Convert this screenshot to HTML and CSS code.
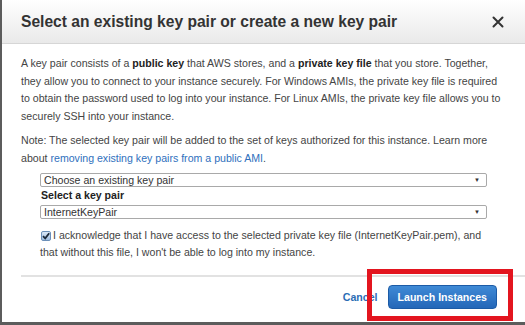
FILE: index.html
```html
<!DOCTYPE html>
<html lang="en">
<head>
  <meta charset="UTF-8">
  <title>Select an existing key pair</title>
  <link rel="stylesheet" href="styles.css">
</head>
<body>
  <div class="modal">
    <div class="modal-header">
      <h2 class="modal-title">Select an existing key pair or create a new key pair</h2>
      <button class="close-btn" aria-label="Close">
        <svg width="12" height="12" viewBox="0 0 12 12"><path d="M1.5 1.5 L10.5 10.5 M10.5 1.5 L1.5 10.5" stroke="#333" stroke-width="2" stroke-linecap="round"/></svg>
      </button>
    </div>

    <div class="modal-body">
      <p class="intro">A key pair consists of a <b>public key</b> that AWS stores, and a <b>private key file</b> that you store. Together, they allow you to connect to your instance securely. For Windows AMIs, the private key file is required to obtain the password used to log into your instance. For Linux AMIs, the private key file allows you to securely SSH into your instance.</p>
      <p class="note">Note: The selected key pair will be added to the set of keys authorized for this instance. Learn more about <a href="#">removing existing key pairs from a public AMI</a>.</p>

      <div class="key-fields">
        <div class="select-box">
          <span>Choose an existing key pair</span>
          <span class="arrow">▼</span>
        </div>
        <div class="field-label">Select a key pair</div>
        <div class="select-box">
          <span>InternetKeyPair</span>
          <span class="arrow">▼</span>
        </div>
        <div class="ack">
          <span class="check"><svg width="8" height="8" viewBox="0 0 8 8"><path d="M1 4.2 L3.2 6.4 L7.2 1.2" fill="none" stroke="#1d2a3a" stroke-width="1.8"/></svg></span>I acknowledge that I have access to the selected private key file (InternetKeyPair.pem), and that without this file, I won't be able to log into my instance.
        </div>
      </div>
    </div>

    <div class="modal-footer">
      <a href="#" class="cancel">Cancel</a>
      <button class="launch">Launch Instances</button>
    </div>

    <div class="highlight"></div>
  </div>
</body>
</html>
```

FILE: styles.css
```css
body {
  margin: 0;
  background: #fff;
  font-family: "Liberation Sans", Arial, sans-serif;
}

.modal {
  position: relative;
  width: 525px;
  height: 325px;
  box-sizing: border-box;
  border-left: 2px solid #5c5c5c;
  border-bottom: 3px solid #5c5c5c;
  background: #fff;
  display: flex;
  flex-direction: column;
  overflow: hidden;
}

.modal-header {
  height: 44px;
  box-sizing: border-box;
  display: flex;
  align-items: center;
  justify-content: space-between;
  padding: 0 21px 0 19px;
  background: linear-gradient(#ffffff, #e9e9e9);
  border-bottom: 1px solid #d6d6d6;
}

.modal-title {
  margin: 0;
  font-size: 15.6px;
  font-weight: bold;
  color: #333;
}

.close-btn {
  border: none;
  background: none;
  padding: 0;
  width: 12px;
  height: 12px;
  display: flex;
}

.modal-body {
  padding: 11px 19px 0 19px;
  font-size: 10.6px;
  line-height: 17.5px;
  color: #444;
}

.modal-body p {
  margin: 0;
}

.modal-body b {
  color: #222;
}

.intro {
  margin-bottom: 7px !important;
}

.note {
  margin-bottom: 6px !important;
}

.note a {
  color: #2f70bd;
  text-decoration: none;
}

.key-fields {
  margin-left: 19px;
  width: 447px;
}

.select-box {
  height: 14px;
  box-sizing: border-box;
  border: 1px solid #a9a9a9;
  border-radius: 2px;
  display: flex;
  align-items: center;
  justify-content: space-between;
  padding: 0 6px 0 3px;
  color: #333;
  line-height: 12px;
}

.arrow {
  font-size: 6px;
  color: #333;
}

.field-label {
  font-weight: bold;
  color: #222;
  margin-left: 1px;
}

.ack {
  margin-top: 8px;
  color: #444;
}

.check {
  display: inline-flex;
  align-items: center;
  justify-content: center;
  width: 10px;
  height: 10px;
  box-sizing: border-box;
  border: 1px solid #6b8fb8;
  border-radius: 2px;
  background: linear-gradient(#dbe8f6, #9fbde0);
  vertical-align: -1px;
  margin: 0 2px 0 1px;
}

.modal-footer {
  margin: 13px 0 0 19px;
  border-top: 2px solid #e2e2e2;
  padding: 8px 28px 0 0;
  display: flex;
  justify-content: flex-end;
  align-items: center;
  gap: 10px;
}

.cancel {
  font-size: 10.6px;
  font-weight: bold;
  color: #2b6cb5;
  text-decoration: none;
}

.launch {
  height: 24px;
  padding: 0 9px;
  border: 1px solid #1c5ba6;
  border-radius: 4px;
  background: linear-gradient(#3f8ad6, #2467b8);
  color: #fff;
  font-family: "Liberation Sans", Arial, sans-serif;
  font-size: 10.6px;
  font-weight: bold;
}

.highlight {
  position: absolute;
  left: 365px;
  top: 269px;
  width: 146px;
  height: 52px;
  box-sizing: border-box;
  border: 5px solid #e3151f;
}
```
